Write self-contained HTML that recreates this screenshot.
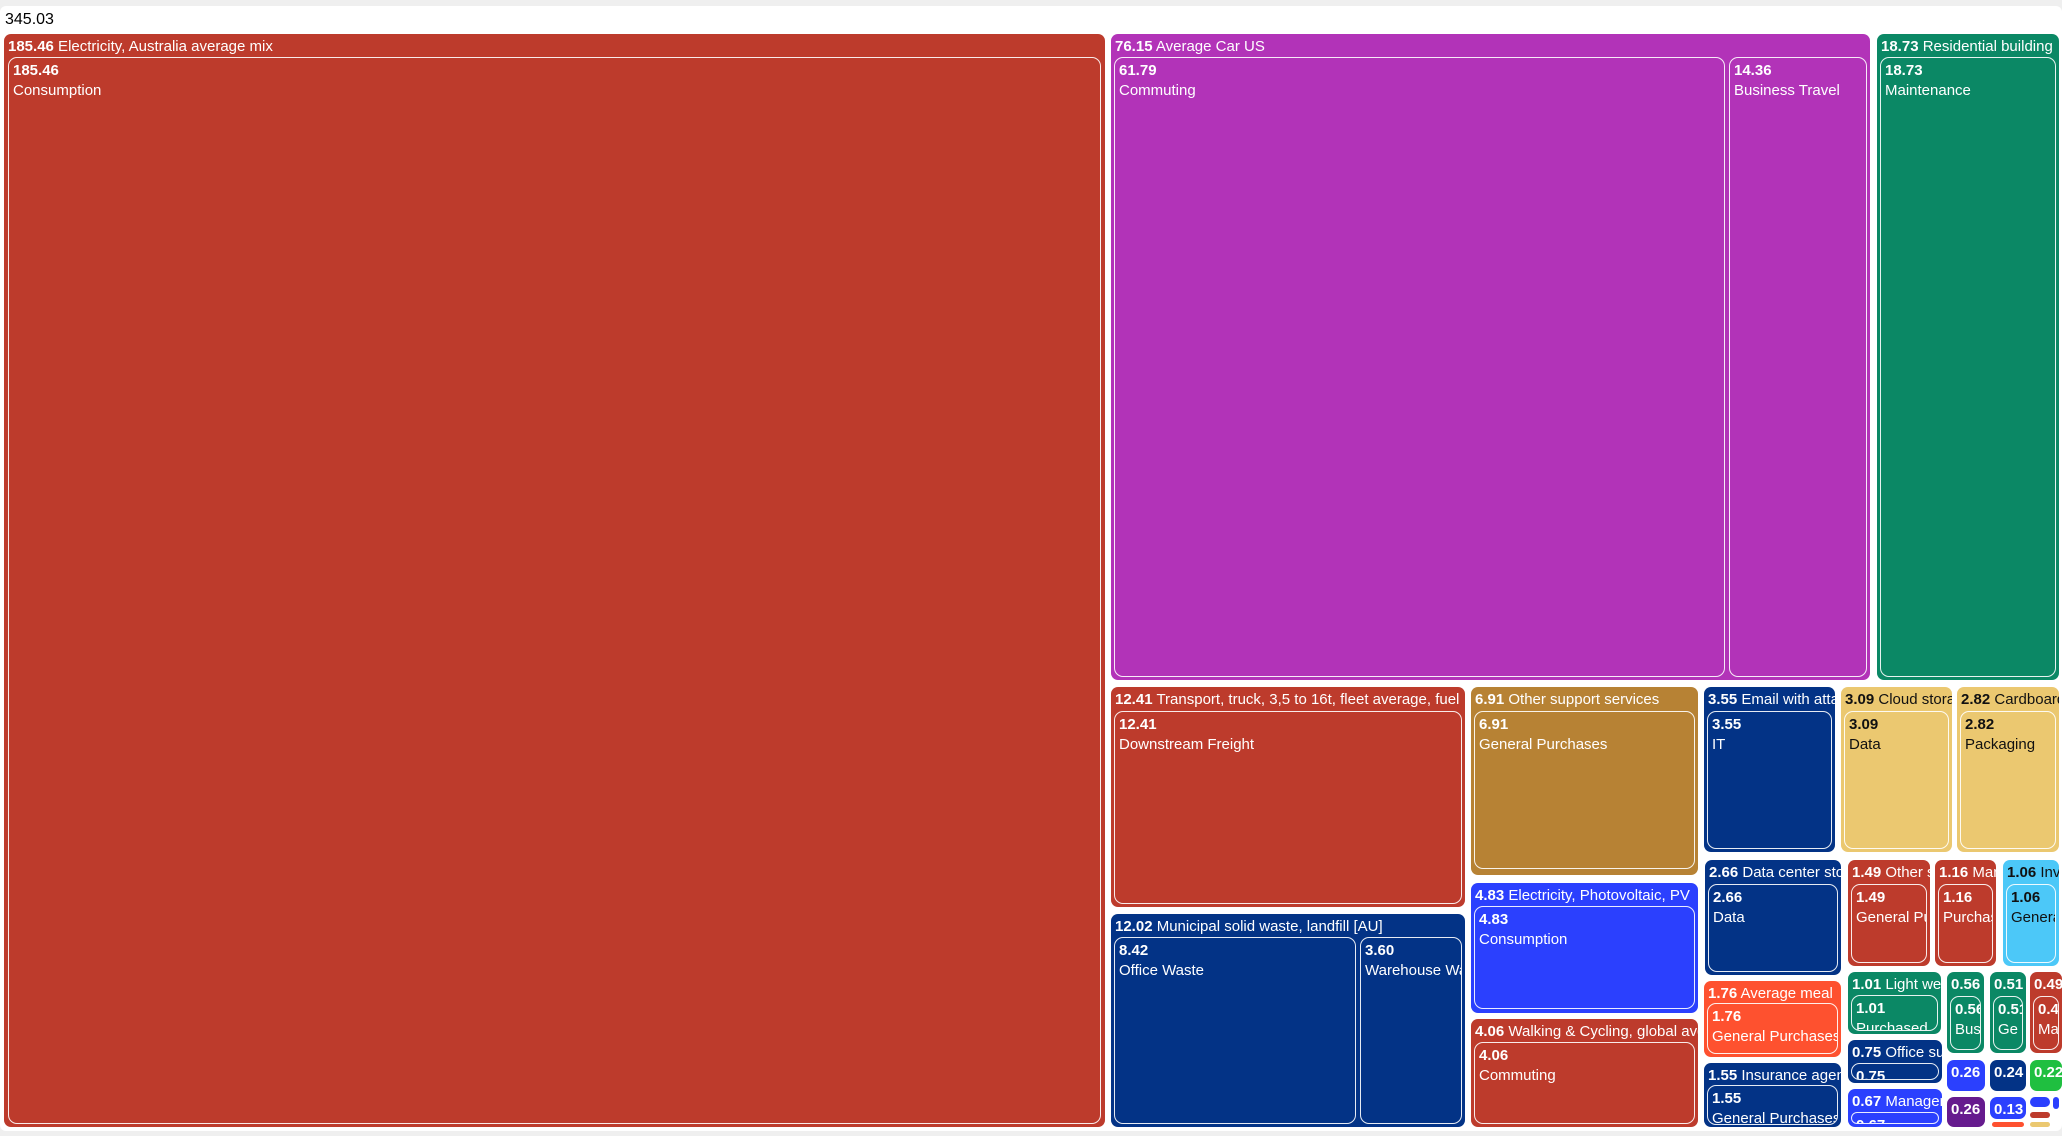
<!DOCTYPE html>
<html><head><meta charset="utf-8"><style>
html,body{margin:0;padding:0}
body{width:2062px;height:1136px;background:#efefef;position:relative;overflow:hidden;font-family:"Liberation Sans",sans-serif}
#panel{position:absolute;left:0;top:6px;width:2062px;height:1125px;background:#fff;border-radius:6px}
#tot{position:absolute;left:5px;top:11px;font-size:16px;color:#000}
.n{position:absolute;border-radius:7px;overflow:hidden;color:#fff;font-size:15px;box-sizing:border-box}
.h{position:absolute;left:4px;top:3px;white-space:nowrap;line-height:19px}
.h b,.c b{font-weight:bold}
.c{position:absolute;border:1.5px solid rgba(255,255,255,.9);border-radius:9px;box-sizing:border-box;overflow:hidden;padding:3px 4px;line-height:20px;white-space:nowrap}
.d{color:#111}
.r{background:#bd3b2c}.p{background:#b233b8}.g{background:#0b8865}.nv{background:#033386}.au{background:#b78234}.bl{background:#2b40fe}.y{background:#ebc870}.o{background:#fe512f}.lb{background:#4cc8f8}.gr{background:#1fbf40}.pu{background:#661b8e}
</style></head><body>
<div id="panel"></div>
<div id="tot">345.03</div>

<div class="n r" style="left:4px;top:34px;width:1101px;height:1093px"><div class="h"><b>185.46</b> Electricity, Australia average mix</div><div class="c" style="left:4px;top:23px;right:4px;bottom:3px"><b>185.46</b><br>Consumption</div></div>

<div class="n p" style="left:1111px;top:34px;width:759px;height:646px"><div class="h"><b>76.15</b> Average Car US</div>
<div class="c" style="left:3px;top:23px;width:611px;bottom:3px"><b>61.79</b><br>Commuting</div>
<div class="c" style="left:618px;top:23px;width:138px;bottom:3px"><b>14.36</b><br>Business Travel</div></div>

<div class="n g" style="left:1877px;top:34px;width:182px;height:646px"><div class="h"><b>18.73</b> Residential building</div><div class="c" style="left:3px;top:23px;right:3px;bottom:3px"><b>18.73</b><br>Maintenance</div></div>

<div class="n r" style="left:1111px;top:687px;width:354px;height:220px"><div class="h"><b>12.41</b> Transport, truck, 3,5 to 16t, fleet average, fuel</div><div class="c" style="left:3px;top:24px;right:3px;bottom:3px"><b>12.41</b><br>Downstream Freight</div></div>

<div class="n nv" style="left:1111px;top:914px;width:354px;height:213px"><div class="h"><b>12.02</b> Municipal solid waste, landfill [AU]</div>
<div class="c" style="left:3px;top:23px;width:242px;bottom:3px"><b>8.42</b><br>Office Waste</div>
<div class="c" style="left:249px;top:23px;width:102px;bottom:3px"><b>3.60</b><br>Warehouse Waste</div></div>

<div class="n au" style="left:1471px;top:687px;width:227px;height:188px"><div class="h"><b>6.91</b> Other support services</div><div class="c" style="left:3px;top:24px;right:3px;bottom:6px"><b>6.91</b><br>General Purchases</div></div>

<div class="n bl" style="left:1471px;top:883px;width:227px;height:130px"><div class="h"><b>4.83</b> Electricity, Photovoltaic, PV</div><div class="c" style="left:3px;top:23px;right:3px;bottom:4px"><b>4.83</b><br>Consumption</div></div>

<div class="n r" style="left:1471px;top:1019px;width:227px;height:108px"><div class="h"><b>4.06</b> Walking &amp; Cycling, global avg</div><div class="c" style="left:3px;top:23px;right:3px;bottom:3px"><b>4.06</b><br>Commuting</div></div>

<div class="n nv" style="left:1704px;top:687px;width:131px;height:165px"><div class="h"><b>3.55</b> Email with attachment</div><div class="c" style="left:3px;top:24px;right:3px;bottom:3px"><b>3.55</b><br>IT</div></div>

<div class="n y d" style="left:1841px;top:687px;width:111px;height:165px"><div class="h"><b>3.09</b> Cloud storage</div><div class="c" style="left:3px;top:24px;right:3px;bottom:3px"><b>3.09</b><br>Data</div></div>

<div class="n y d" style="left:1957px;top:687px;width:102px;height:165px"><div class="h"><b>2.82</b> Cardboard</div><div class="c" style="left:3px;top:24px;right:3px;bottom:3px"><b>2.82</b><br>Packaging</div></div>

<div class="n nv" style="left:1705px;top:860px;width:136px;height:115px"><div class="h"><b>2.66</b> Data center storage</div><div class="c" style="left:3px;top:24px;right:3px;bottom:3px"><b>2.66</b><br>Data</div></div>

<div class="n o" style="left:1704px;top:981px;width:137px;height:76px"><div class="h"><b>1.76</b> Average meal</div><div class="c" style="left:3px;top:22px;right:3px;bottom:3px"><b>1.76</b><br>General Purchases</div></div>

<div class="n nv" style="left:1704px;top:1063px;width:137px;height:64px"><div class="h"><b>1.55</b> Insurance agency</div><div class="c" style="left:3px;top:22px;right:3px;bottom:2px"><b>1.55</b><br>General Purchases</div></div>

<div class="n r" style="left:1848px;top:860px;width:82px;height:106px"><div class="h"><b>1.49</b> Other services</div><div class="c" style="left:3px;top:24px;right:3px;bottom:3px"><b>1.49</b><br>General Purchases</div></div>

<div class="n r" style="left:1935px;top:860px;width:61px;height:106px"><div class="h"><b>1.16</b> Manufacturing</div><div class="c" style="left:3px;top:24px;right:3px;bottom:3px"><b>1.16</b><br>Purchases</div></div>

<div class="n lb d" style="left:2003px;top:860px;width:56px;height:106px"><div class="h"><b>1.06</b> Investments</div><div class="c" style="left:3px;top:24px;right:3px;bottom:3px"><b>1.06</b><br>General</div></div>

<div class="n g" style="left:1848px;top:972px;width:93px;height:62px"><div class="h"><b>1.01</b> Light weight</div><div class="c" style="left:3px;top:23px;right:3px;bottom:3px"><b>1.01</b><br>Purchased</div></div>

<div class="n g" style="left:1947px;top:972px;width:37px;height:81px"><div class="h"><b>0.56</b></div><div class="c" style="left:3px;top:24px;right:3px;bottom:3px"><b>0.56</b><br>Bus</div></div>
<div class="n g" style="left:1990px;top:972px;width:36px;height:81px"><div class="h"><b>0.51</b></div><div class="c" style="left:3px;top:24px;right:3px;bottom:3px"><b>0.51</b><br>Ge</div></div>
<div class="n r" style="left:2030px;top:972px;width:32px;height:81px"><div class="h"><b>0.49</b></div><div class="c" style="left:3px;top:24px;right:3px;bottom:3px"><b>0.49</b><br>Ma</div></div>

<div class="n nv" style="left:1848px;top:1040px;width:94px;height:43px"><div class="h"><b>0.75</b> Office supplies</div><div class="c" style="left:3px;top:23px;right:3px;bottom:3px"><b>0.75</b></div></div>
<div class="n bl" style="left:1848px;top:1089px;width:94px;height:38px"><div class="h"><b>0.67</b> Management</div><div class="c" style="left:3px;top:23px;right:3px;bottom:3px"><b>0.67</b></div></div>

<div class="n bl" style="left:1947px;top:1060px;width:38px;height:31px"><div class="h"><b>0.26</b></div></div>
<div class="n nv" style="left:1990px;top:1060px;width:36px;height:31px"><div class="h"><b>0.24</b></div></div>
<div class="n gr" style="left:2030px;top:1060px;width:32px;height:31px"><div class="h"><b>0.22</b></div></div>
<div class="n pu" style="left:1947px;top:1097px;width:38px;height:30px"><div class="h"><b>0.26</b></div></div>
<div class="n bl" style="left:1990px;top:1097px;width:36px;height:22px"><div class="h"><b>0.13</b></div></div>
<div class="n o" style="left:1992px;top:1122px;width:32px;height:5px"></div>
<div class="n bl" style="left:2030px;top:1097px;width:20px;height:10px"></div>
<div class="n r" style="left:2030px;top:1112px;width:20px;height:6px"></div>
<div class="n y" style="left:2030px;top:1122px;width:20px;height:5px"></div>
<div class="n bl" style="left:2053px;top:1097px;width:6px;height:12px"></div>
</body></html>
